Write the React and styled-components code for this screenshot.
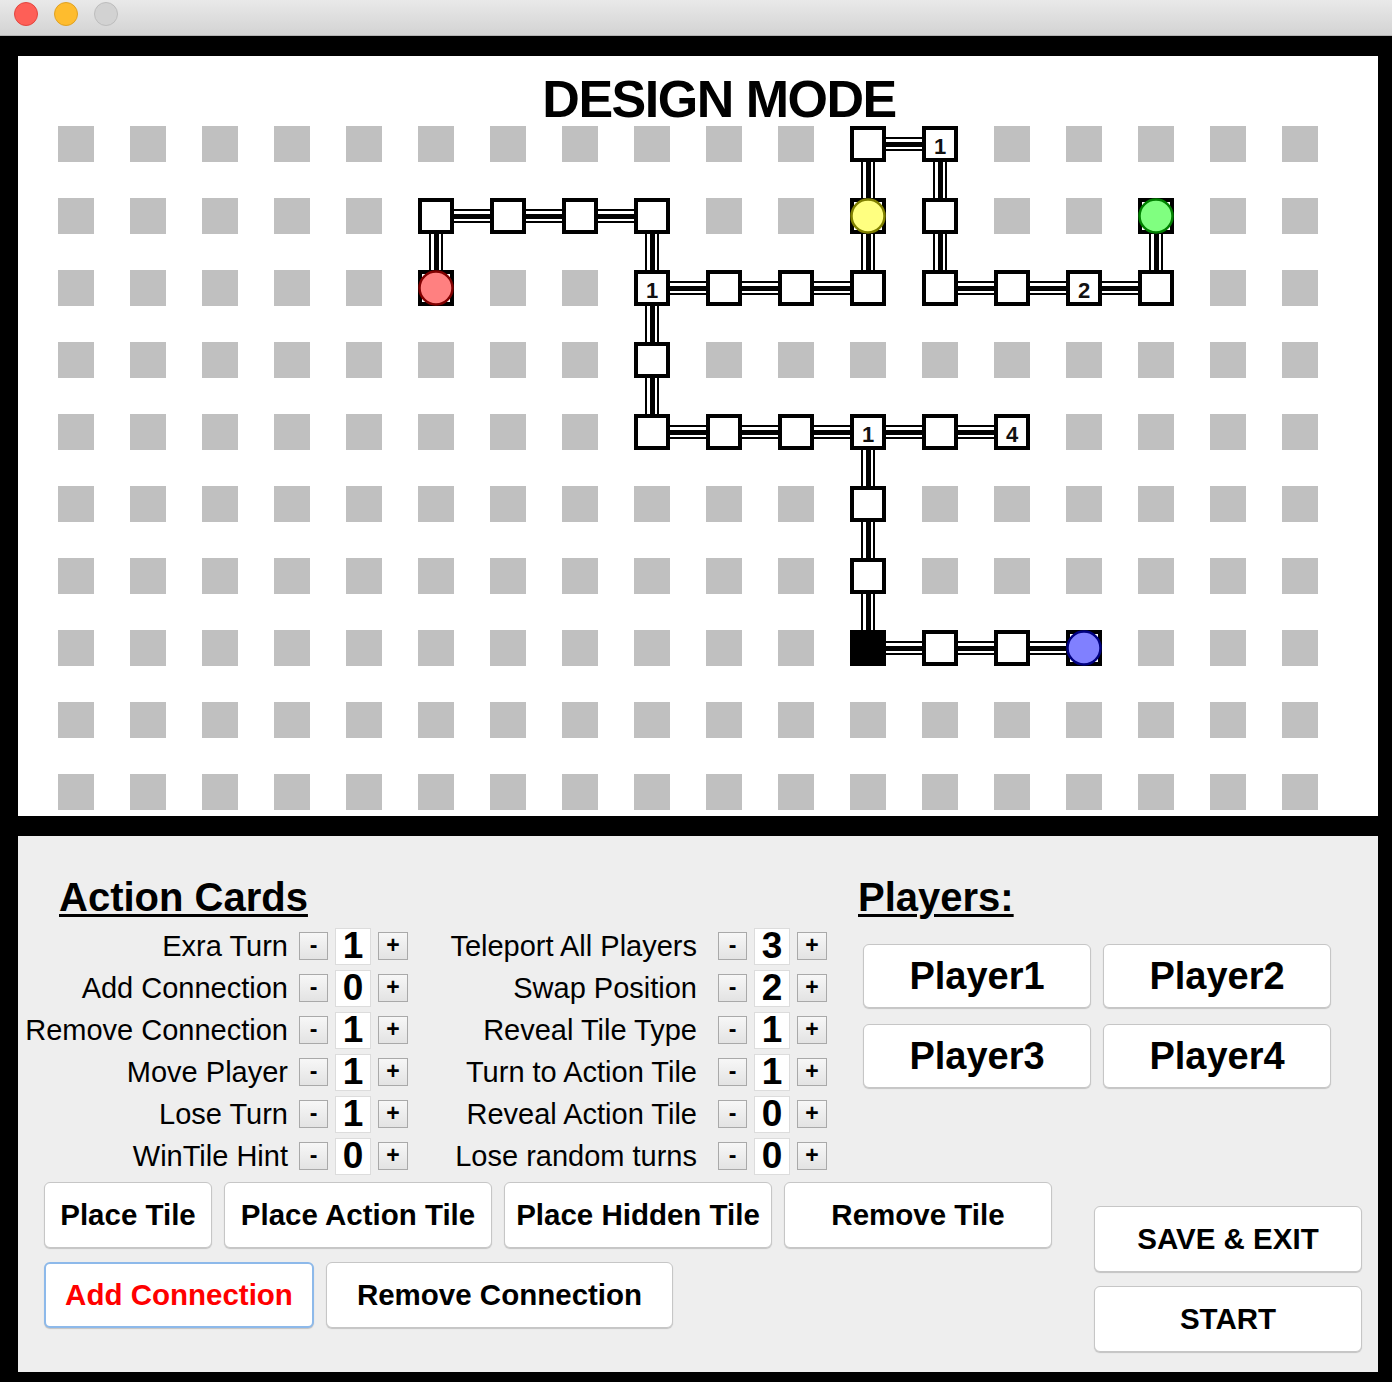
import React from 'react';
import styled, { createGlobalStyle } from 'styled-components';

const GlobalStyle = createGlobalStyle`
  html, body {
    margin: 0;
    padding: 0;
    background: #000;
  }
  body {
    font-family: "Liberation Sans", Arial, sans-serif;
  }
`;

const Window = styled.div`
  width: 1392px;
  height: 1382px;
  display: flex;
  flex-direction: column;
  background: #000;
  overflow: hidden;
`;

const TitleBar = styled.div`
  height: 35px;
  border-bottom: 1px solid #b3b3b3;
  background: linear-gradient(#e9e9e9, #d3d3d3);
  display: flex;
  align-items: flex-start;
  gap: 16px;
  padding: 2px 0 0 14px;
  box-sizing: content-box;
`;

const Light = styled.span`
  width: 22px;
  height: 22px;
  border-radius: 50%;
  background: ${(p) => p.$fill};
  border: 1px solid ${(p) => p.$edge};
`;

const Content = styled.div`
  flex: 1;
  display: flex;
  flex-direction: column;
  gap: 20px;
  padding: 20px 14px 10px 18px;
`;

const Board = styled.div`
  height: 760px;
  background: #fff;
  display: flex;
  flex-direction: column;
`;

const Title = styled.h1`
  margin: 0;
  height: 70px;
  box-sizing: border-box;
  padding: 17px 0 0 42px;
  line-height: 52px;
  text-align: center;
  font-size: 52px;
  letter-spacing: -1.5px;
  font-weight: 700;
  color: #000;
`;

const Panel = styled.div`
  height: 536px;
  box-sizing: border-box;
  background: #eeeeee;
  padding: 39px 16px 0 0;
  display: flex;
  flex-direction: column;
`;

const TopRow = styled.div`
  display: flex;
`;

const CardsSection = styled.div`
  display: flex;
  flex-direction: column;
`;

const Heading = styled.h2`
  margin: 0 0 0 ${(p) => p.$indent}px;
  font-size: 40px;
  line-height: 44px;
  font-weight: 700;
  color: #000;
  text-decoration: underline;
  text-decoration-thickness: 3px;
  text-underline-offset: 3px;
`;

const CardColumns = styled.div`
  display: flex;
  margin-top: 6px;
`;

const CardColumn = styled.div`
  display: flex;
  flex-direction: column;
`;

const CardRow = styled.div`
  height: 42px;
  display: flex;
  align-items: center;
`;

const CardLabel = styled.span`
  width: ${(p) => p.$width}px;
  margin-right: ${(p) => p.$space}px;
  text-align: right;
  white-space: nowrap;
  font-size: 29px;
  line-height: 42px;
  color: #000;
`;

const StepButton = styled.span`
  width: ${(p) => p.$w}px;
  height: 28px;
  box-sizing: border-box;
  border: 1px solid #a9a9a9;
  background: linear-gradient(#f7f7f7, #e3e3e3);
  display: flex;
  align-items: center;
  justify-content: center;
  padding-bottom: 2px;
  font-size: 23px;
  font-weight: 700;
  color: #000;
`;

const ValueBox = styled.span`
  width: 36px;
  height: 37px;
  box-sizing: border-box;
  margin: 0 7px;
  border: 1px solid #dcdcdc;
  background: #fff;
  display: flex;
  align-items: center;
  justify-content: center;
  font-size: 37px;
  font-weight: 700;
  color: #000;
`;

const PlayersSection = styled.div`
  margin-left: 31px;
  display: flex;
  flex-direction: column;
`;

const PlayerGrid = styled.div`
  margin: 25px 0 0 5px;
  display: grid;
  grid-template-columns: 228px 228px;
  column-gap: 12px;
  row-gap: 16px;
`;

const Button = styled.button`
  width: ${(p) => p.$width}px;
  height: ${(p) => p.$height || 66}px;
  box-sizing: border-box;
  padding: 0;
  border-radius: 6px;
  border: ${(p) => (p.$focused ? '2px solid #8db9ea' : '1px solid #c6c6c6')};
  background: #fff;
  box-shadow: 0 1px 1px rgba(0, 0, 0, 0.18);
  font-family: "Liberation Sans", Arial, sans-serif;
  font-size: ${(p) => p.$size || 29.5}px;
  font-weight: 700;
  color: ${(p) => (p.$focused ? '#ff0000' : '#000')};
  white-space: nowrap;
`;

const BottomRow = styled.div`
  margin-top: 5px;
  display: flex;
  justify-content: space-between;
  padding-left: 26px;
`;

const ToolGroup = styled.div`
  display: flex;
  flex-direction: column;
  gap: 14px;
`;

const ToolRow = styled.div`
  display: flex;
  gap: 12px;
`;

const SideGroup = styled.div`
  margin-top: 24px;
  display: flex;
  flex-direction: column;
  gap: 14px;
`;

// board drawing
const STEP = 72;
const SIZE = 36;
const OX = 40;

const tiles = [
  { c: 5, r: 1 }, { c: 6, r: 1 }, { c: 7, r: 1 }, { c: 8, r: 1 },
  { c: 5, r: 2, player: ['#ff8080', '#800000'] },
  { c: 8, r: 2, label: '1' }, { c: 9, r: 2 }, { c: 10, r: 2 }, { c: 11, r: 2 },
  { c: 11, r: 1, player: ['#ffff80', '#808000'] },
  { c: 11, r: 0 }, { c: 12, r: 0, label: '1' }, { c: 12, r: 1 }, { c: 12, r: 2 },
  { c: 13, r: 2 }, { c: 14, r: 2, label: '2' }, { c: 15, r: 2 },
  { c: 15, r: 1, player: ['#80ff80', '#008000'] },
  { c: 8, r: 3 }, { c: 8, r: 4 }, { c: 9, r: 4 }, { c: 10, r: 4 },
  { c: 11, r: 4, label: '1' }, { c: 12, r: 4 }, { c: 13, r: 4, label: '4' },
  { c: 11, r: 5 }, { c: 11, r: 6 }, { c: 11, r: 7, dark: true },
  { c: 12, r: 7 }, { c: 13, r: 7 },
  { c: 14, r: 7, player: ['#8080ff', '#000080'] },
];

const links = [
  [5, 1, 6, 1], [6, 1, 7, 1], [7, 1, 8, 1],
  [5, 1, 5, 2], [8, 1, 8, 2],
  [8, 2, 9, 2], [9, 2, 10, 2], [10, 2, 11, 2],
  [11, 0, 11, 1], [11, 1, 11, 2], [11, 0, 12, 0],
  [12, 0, 12, 1], [12, 1, 12, 2],
  [12, 2, 13, 2], [13, 2, 14, 2], [14, 2, 15, 2], [15, 1, 15, 2],
  [8, 2, 8, 3], [8, 3, 8, 4],
  [8, 4, 9, 4], [9, 4, 10, 4], [10, 4, 11, 4], [11, 4, 12, 4], [12, 4, 13, 4],
  [11, 4, 11, 5], [11, 5, 11, 6], [11, 6, 11, 7],
  [11, 7, 12, 7], [12, 7, 13, 7], [13, 7, 14, 7],
];

function Link({ c1, r1, c2, r2 }) {
  if (r1 === r2) {
    const x = OX + STEP * Math.min(c1, c2) + SIZE;
    const w = STEP - SIZE;
    const cy = STEP * r1 + 18;
    return (
      <g fill="#000">
        <rect x={x} y={cy - 7} width={w} height={2} />
        <rect x={x} y={cy - 2} width={w} height={5} />
        <rect x={x} y={cy + 5} width={w} height={2} />
      </g>
    );
  }
  const y = STEP * Math.min(r1, r2) + SIZE;
  const h = STEP - SIZE;
  const cx = OX + STEP * c1 + 18;
  return (
    <g fill="#000">
      <rect x={cx - 7} y={y} width={2} height={h} />
      <rect x={cx - 2} y={y} width={5} height={h} />
      <rect x={cx + 5} y={y} width={2} height={h} />
    </g>
  );
}

function GameBoard() {
  const taken = new Set(tiles.map((t) => `${t.c}-${t.r}`));
  const empty = [];
  for (let r = 0; r < 10; r++) {
    for (let c = 0; c < 18; c++) {
      if (!taken.has(`${c}-${r}`)) empty.push({ c, r });
    }
  }
  return (
    <svg width="1360" height="690" viewBox="0 0 1360 690">
      {empty.map(({ c, r }) => (
        <rect key={`${c}-${r}`} x={OX + STEP * c} y={STEP * r} width={SIZE} height={SIZE} fill="#c0c0c0" />
      ))}
      {links.map(([c1, r1, c2, r2], i) => (
        <Link key={i} c1={c1} r1={r1} c2={c2} r2={r2} />
      ))}
      {tiles.map((t) => {
        const x = OX + STEP * t.c;
        const y = STEP * t.r;
        return (
          <g key={`${t.c}-${t.r}`}>
            <rect x={x + 2} y={y + 2} width={32} height={32} fill={t.dark ? '#000' : '#fff'} stroke="#000" strokeWidth="4" />
            {t.label && (
              <text
                x={x + 18}
                y={y + 28}
                textAnchor="middle"
                fontFamily="Liberation Sans, Arial, sans-serif"
                fontWeight="700"
                fontSize="22"
                fill="#111"
              >
                {t.label}
              </text>
            )}
            {t.player && (
              <circle cx={x + 18} cy={y + 18} r={16.5} fill={t.player[0]} stroke={t.player[1]} strokeWidth="2.5" />
            )}
          </g>
        );
      })}
    </svg>
  );
}

const leftCards = [
  ['Exra Turn', 1], ['Add Connection', 0], ['Remove Connection', 1],
  ['Move Player', 1], ['Lose Turn', 1], ['WinTile Hint', 0],
];

const rightCards = [
  ['Teleport All Players', 3], ['Swap Position', 2], ['Reveal Tile Type', 1],
  ['Turn to Action Tile', 1], ['Reveal Action Tile', 0], ['Lose random turns', 0],
];

function CardList({ cards, labelWidth, space }) {
  return (
    <CardColumn>
      {cards.map(([name, count]) => (
        <CardRow key={name}>
          <CardLabel $width={labelWidth} $space={space}>{name}</CardLabel>
          <StepButton $w={29}>-</StepButton>
          <ValueBox>{count}</ValueBox>
          <StepButton $w={30}>+</StepButton>
        </CardRow>
      ))}
    </CardColumn>
  );
}

export default function App() {
  return (
    <Window>
      <GlobalStyle />
      <TitleBar>
        <Light $fill="#fe5f57" $edge="#e2463f" />
        <Light $fill="#febc2e" $edge="#dfa123" />
        <Light $fill="#d2d2d2" $edge="#bdbdbd" />
      </TitleBar>
      <Content>
        <Board>
          <Title>DESIGN MODE</Title>
          <GameBoard />
        </Board>
        <Panel>
          <TopRow>
            <CardsSection>
              <Heading $indent={41}>Action Cards</Heading>
              <CardColumns>
                <CardList cards={leftCards} labelWidth={270} space={11} />
                <CardList cards={rightCards} labelWidth={289} space={21} />
              </CardColumns>
            </CardsSection>
            <PlayersSection>
              <Heading $indent={0}>Players:</Heading>
              <PlayerGrid>
                {['Player1', 'Player2', 'Player3', 'Player4'].map((p) => (
                  <Button key={p} $width={228} $height={64} $size={38}>{p}</Button>
                ))}
              </PlayerGrid>
            </PlayersSection>
          </TopRow>
          <BottomRow>
            <ToolGroup>
              <ToolRow>
                <Button $width={168}>Place Tile</Button>
                <Button $width={268}>Place Action Tile</Button>
                <Button $width={268}>Place Hidden Tile</Button>
                <Button $width={268}>Remove Tile</Button>
              </ToolRow>
              <ToolRow>
                <Button $width={270} $focused>Add Connection</Button>
                <Button $width={347}>Remove Connection</Button>
              </ToolRow>
            </ToolGroup>
            <SideGroup>
              <Button $width={268}>SAVE &amp; EXIT</Button>
              <Button $width={268}>START</Button>
            </SideGroup>
          </BottomRow>
        </Panel>
      </Content>
    </Window>
  );
}
